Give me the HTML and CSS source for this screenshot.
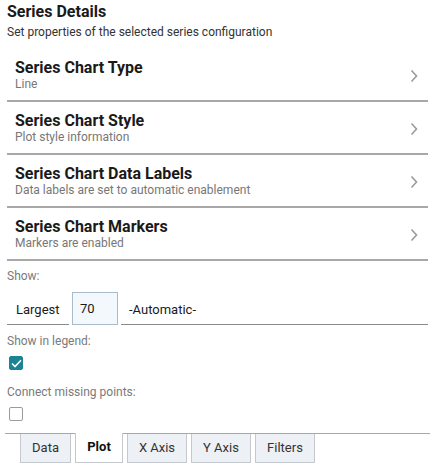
FILE: index.html
```html
<!DOCTYPE html>
<html lang="en">
<head>
  <meta charset="UTF-8">
  <title>Series Details</title>
  <link rel="stylesheet" href="styles.css">
</head>
<body>

  <div class="panel-head">
    <h1>Series Details</h1>
    <p class="subtitle">Set properties of the selected series configuration</p>
  </div>

  <ul class="nav-list">
    <li class="nav-row">
      <div class="nav-text">
        <div class="nav-title">Series Chart Type</div>
        <div class="nav-sub">Line</div>
      </div>
      <svg class="chev" width="8" height="14" viewBox="0 0 8 14"><path d="M1.5 1.5 L6.5 7 L1.5 12.5" fill="none" stroke="#9a9a9a" stroke-width="1.6"/></svg>
    </li>
    <li class="nav-row">
      <div class="nav-text">
        <div class="nav-title">Series Chart Style</div>
        <div class="nav-sub">Plot style information</div>
      </div>
      <svg class="chev" width="8" height="14" viewBox="0 0 8 14"><path d="M1.5 1.5 L6.5 7 L1.5 12.5" fill="none" stroke="#9a9a9a" stroke-width="1.6"/></svg>
    </li>
    <li class="nav-row">
      <div class="nav-text">
        <div class="nav-title">Series Chart Data Labels</div>
        <div class="nav-sub">Data labels are set to automatic enablement</div>
      </div>
      <svg class="chev" width="8" height="14" viewBox="0 0 8 14"><path d="M1.5 1.5 L6.5 7 L1.5 12.5" fill="none" stroke="#9a9a9a" stroke-width="1.6"/></svg>
    </li>
    <li class="nav-row">
      <div class="nav-text">
        <div class="nav-title">Series Chart Markers</div>
        <div class="nav-sub">Markers are enabled</div>
      </div>
      <svg class="chev" width="8" height="14" viewBox="0 0 8 14"><path d="M1.5 1.5 L6.5 7 L1.5 12.5" fill="none" stroke="#9a9a9a" stroke-width="1.6"/></svg>
    </li>
  </ul>

  <div class="field-label first">Show:</div>
  <div class="show-row">
    <div class="sel sel-small">Largest</div>
    <div class="num-box">70</div>
    <div class="sel sel-wide">-Automatic-</div>
  </div>

  <div class="field-label legend">Show in legend:</div>
  <div class="check on">
    <svg width="11" height="9" viewBox="0 0 11 9"><path d="M1 4.5 L4 7.5 L10 1.2" fill="none" stroke="#fff" stroke-width="1.6"/></svg>
  </div>

  <div class="field-label">Connect missing points:</div>
  <div class="check"></div>

  <div class="tabs">
    <div class="tab tab-data">Data</div>
    <div class="tab active">Plot</div>
    <div class="tab">X Axis</div>
    <div class="tab">Y Axis</div>
    <div class="tab">Filters</div>
  </div>

</body>
</html>
```

FILE: styles.css
```css
html {
  font-family: Roboto, 'Liberation Sans', sans-serif;
}

body {
  margin: 0;
  padding: 0 7px;
  background-color: #ffffff;
  color: #1a1a1a;
}

.panel-head {
  padding-top: 2px;
}

h1 {
  font-size: 16px;
  font-weight: bold;
  margin: 0;
  line-height: 20px;
}

.subtitle {
  font-size: 12px;
  color: #333;
  margin: 2px 0 0 0;
  line-height: 16px;
}

.nav-list {
  list-style: none;
  margin: 9px 0 0 0;
  padding: 0;
}

.nav-row {
  display: flex;
  align-items: center;
  justify-content: space-between;
  padding: 0 10px 0 8px;
  height: 51px;
  border-bottom: 2px solid #a8a8a8;
}

.nav-title {
  font-size: 16px;
  font-weight: bold;
  line-height: 19px;
  color: #1a1a1a;
}

.nav-sub {
  font-size: 12px;
  color: #777;
  line-height: 15px;
}

.chev {
  display: block;
  margin-top: 2px;
}

.field-label {
  font-size: 12px;
  color: #7a7a7a;
  line-height: 16px;
  margin-top: 14px;
}

.field-label.first {
  margin-top: 7px;
}

.field-label.legend {
  margin-top: 8px;
}

.show-row {
  display: flex;
  gap: 3px;
  margin-top: 8px;
  align-items: flex-end;
}

.sel {
  font-size: 13px;
  color: #1a1a1a;
  border-bottom: 1px solid #8a8a8a;
  height: 30px;
  line-height: 30px;
  box-sizing: border-box;
}

.sel-small {
  width: 62px;
  padding-left: 9px;
  box-sizing: border-box;
}

.sel-wide {
  flex: 1;
  padding-left: 8px;
}

.num-box {
  width: 46px;
  height: 33px;
  box-sizing: border-box;
  border: 1px solid #a9bccd;
  background-color: #f3f8fd;
  font-size: 13px;
  line-height: 31px;
  padding-left: 7px;
}

.check {
  width: 14px;
  height: 14px;
  box-sizing: border-box;
  border: 1px solid #9a9a9a;
  border-radius: 2px;
  margin: 7px 0 0 2px;
  display: flex;
  align-items: center;
  justify-content: center;
}

.check.on {
  background-color: #1b8394;
  border-color: #1b8394;
}

.tabs {
  display: flex;
  gap: 4px;
  margin: 12px -2px 0 -2px;
  padding-left: 15px;
  border-top: 1px solid #a8a8a8;
}

.tab {
  font-size: 13px;
  color: #333;
  background-color: #edf0f4;
  border: 1px solid #c4c9cf;
  border-top: none;
  height: 29px;
  line-height: 28px;
  box-sizing: border-box;
  width: 60px;
  text-align: center;
}

.tab.tab-data {
  width: 51px;
}

.tab.active {
  background-color: #fff;
  color: #111;
  font-weight: bold;
  width: 48px;
  margin-top: -1px;
  height: 30px;
}
```
